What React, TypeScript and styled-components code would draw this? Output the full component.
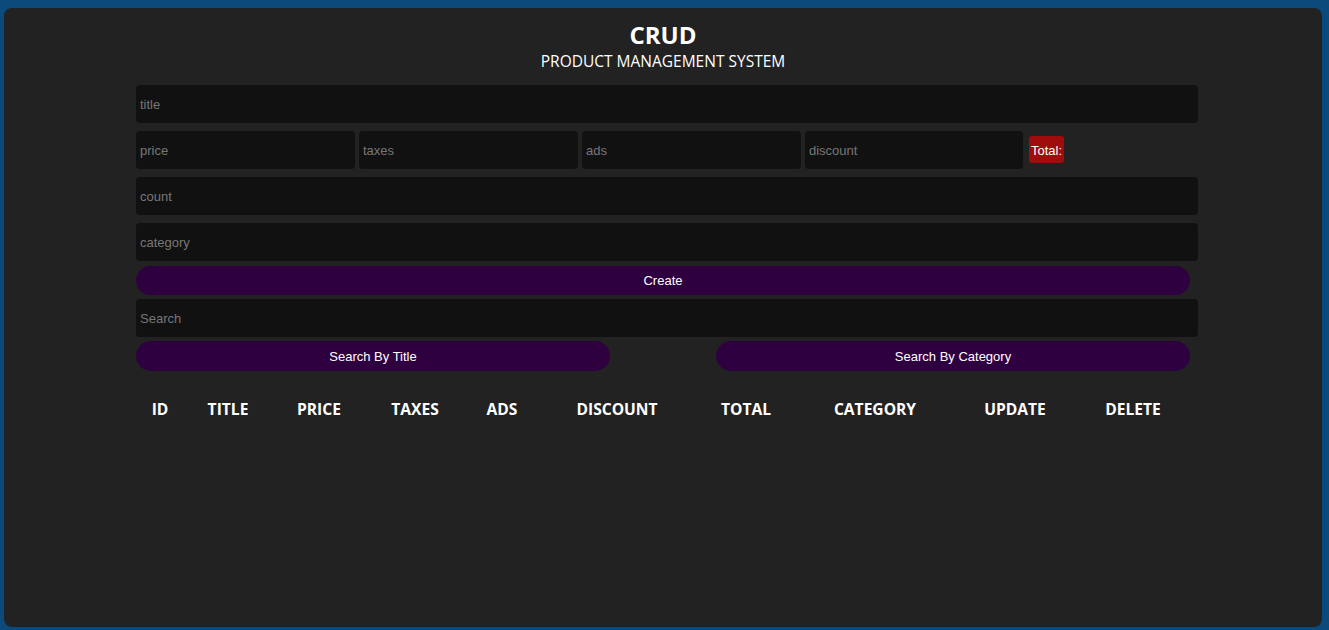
import React from "react";
import styled, { createGlobalStyle } from "styled-components";

const Global = createGlobalStyle`
  html, body { margin: 0; padding: 0; }
  body {
    background: #0b4a7a;
    padding: 8px 7px 3px 4px;
    font-family: "Liberation Sans", Arial, sans-serif;
  }
  * { box-sizing: border-box; }
`;

const Panel = styled.div`
  background: #222222;
  border-radius: 8px;
  height: 619px;
  display: flex;
  flex-direction: column;
  align-items: center;
  color: #fff;
`;

const Header = styled.header`
  text-align: center;
  padding-top: 13px;
  font-family: "Open Sans", "Noto Sans", sans-serif;
`;

const Title = styled.h2`
  margin: 0;
  font-size: 24px;
  font-weight: 700;
  line-height: 28px;
`;

const Subtitle = styled.p`
  margin: 0;
  font-size: 15.5px;
  line-height: 24px;
`;

const Form = styled.div`
  width: 1062px;
  margin-left: 8px;
  margin-top: 12px;
  display: flex;
  flex-direction: column;
`;

const Input = styled.input<{ $w?: number }>`
  height: 38px;
  width: ${(p) => (p.$w ? `${p.$w}px` : "100%")};
  background: #111111;
  border: none;
  outline: none;
  border-radius: 4px;
  padding: 0 4px;
  color: #fff;
  font-family: "Liberation Sans", Arial, sans-serif;
  font-size: 13px;
  margin-bottom: 8px;
  &::placeholder { color: #777; }
`;

const Row = styled.div`
  display: flex;
  align-items: flex-start;
  gap: 4px;
`;

const Total = styled.small`
  margin-left: 2px;
  margin-top: 5px;
  background: #a00b0b;
  color: #fff;
  border-radius: 3px;
  padding: 1px 2px 0;
  height: 27px;
  line-height: 27px;
  font-size: 13px;
`;

const Button = styled.button<{ $w?: number }>`
  width: ${(p) => (p.$w ? `${p.$w}px` : "1054px")};
  height: 29px;
  background: #2f0040;
  border: none;
  border-radius: 15px;
  color: #fff;
  font-family: "Liberation Sans", Arial, sans-serif;
  font-size: 13px;
  cursor: pointer;
  padding: 0;
`;

const CreateButton = styled(Button)`
  margin-top: -3px;
  margin-bottom: 4px;
`;

const SearchRow = styled.div`
  display: flex;
  width: 1054px;
  justify-content: space-between;
  margin-top: -4px;
`;

const SearchButton = styled(Button)`
  height: 30px;
`;

const Table = styled.table`
  margin-top: 24px;
  width: 1052px;
  border-collapse: collapse;
  table-layout: fixed;
  font-family: "Open Sans", "Noto Sans", sans-serif;
`;

const Th = styled.th<{ $w: number }>`
  width: ${(p) => p.$w}px;
  font-size: 15.6px;
  font-weight: 700;
  text-transform: uppercase;
  padding: 0;
  height: 28px;
  text-align: center;
`;

const cols: [string, number][] = [
  ["id", 48],
  ["title", 88],
  ["price", 94],
  ["taxes", 98],
  ["ads", 76],
  ["discount", 154],
  ["total", 104],
  ["category", 154],
  ["update", 126],
  ["delete", 110],
];

export default function App() {
  return (
    <>
      <Global />
      <Panel>
        <Header>
          <Title>CRUD</Title>
          <Subtitle>PRODUCT MANAGEMENT SYSTEM</Subtitle>
        </Header>
        <Form>
          <Input placeholder="title" />
          <Row>
            <Input $w={219} placeholder="price" />
            <Input $w={219} placeholder="taxes" />
            <Input $w={219} placeholder="ads" />
            <Input $w={218} placeholder="discount" />
            <Total>Total:</Total>
          </Row>
          <Input placeholder="count" />
          <Input placeholder="category" />
          <CreateButton>Create</CreateButton>
          <Input placeholder="Search" />
          <SearchRow>
            <SearchButton $w={474}>Search By Title</SearchButton>
            <SearchButton $w={474}>Search By Category</SearchButton>
          </SearchRow>
          <Table>
            <thead>
              <tr>
                {cols.map(([c, w]) => (
                  <Th key={c} $w={w}>{c}</Th>
                ))}
              </tr>
            </thead>
            <tbody></tbody>
          </Table>
        </Form>
      </Panel>
    </>
  );
}
